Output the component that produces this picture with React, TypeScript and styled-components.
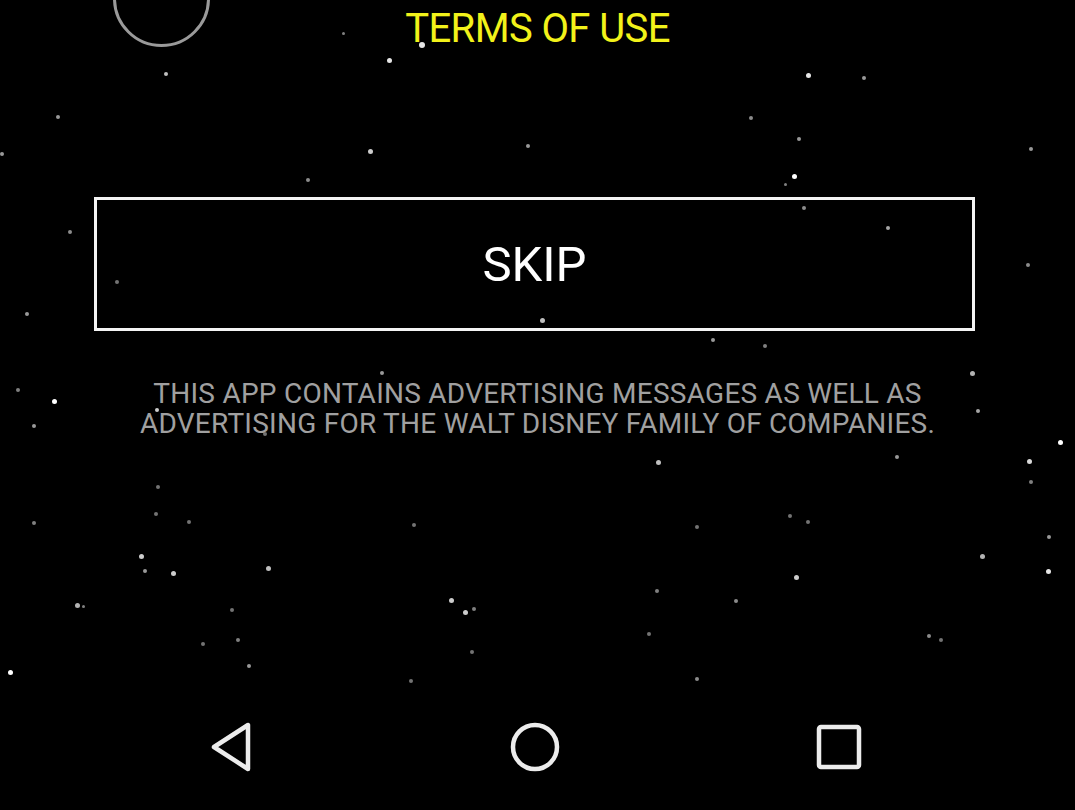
import React from "react";
import styled, { createGlobalStyle } from "styled-components";

const Global = createGlobalStyle`
  html, body { margin: 0; padding: 0; background: #000; }
  body { font-family: Roboto, "Noto Sans", sans-serif; }
`;

const Screen = styled.div`
  position: relative;
  width: 1075px;
  height: 810px;
  background: #000;
  overflow: hidden;
  display: flex;
  flex-direction: column;
`;

const Starfield = styled.div`
  position: absolute;
  inset: 0;
  pointer-events: none;
`;

const Star = styled.span<{ $s: number; $o: number }>`
  position: absolute;
  width: ${(p) => p.$s}px;
  height: ${(p) => p.$s}px;
  margin: ${(p) => -p.$s / 2}px 0 0 ${(p) => -p.$s / 2}px;
  border-radius: 50%;
  background: rgba(255, 255, 255, ${(p) => p.$o});
`;

const CornerRing = styled.div`
  position: absolute;
  left: 113px;
  top: -50px;
  width: 91px;
  height: 91px;
  border: 3px solid #9a9a9a;
  border-radius: 50%;
`;

const Main = styled.main`
  position: relative;
  flex: 1;
  display: flex;
  flex-direction: column;
  align-items: center;
`;

const Title = styled.h1`
  margin: 2px 0 0;
  height: 54px;
  line-height: 54px;
  font-size: 40px;
  font-weight: 400;
  color: #f2f21a;
  letter-spacing: -0.6px;
`;

const SkipButton = styled.button`
  box-sizing: border-box;
  margin: 141px 0 0 -6px;
  width: 881px;
  height: 134px;
  background: transparent;
  border: 3px solid #f4f4f4;
  color: #fff;
  font-family: Roboto, "Noto Sans", sans-serif;
  font-size: 49px;
  font-weight: 400;
  letter-spacing: 0px;
  cursor: pointer;
`;

const Disclaimer = styled.p`
  margin: 48px 0 0;
  text-align: center;
  font-size: 28px;
  line-height: 30px;
  color: #a0a0a0;
  letter-spacing: 0.25px;
`;

const NavBar = styled.nav`
  position: relative;
  height: 126px;
  display: grid;
  grid-template-columns: 232px 303px 304px;
  align-items: center;
`;

const NavSlot = styled.div`
  display: flex;
  justify-content: flex-end;
  width: 100%;
`;

const NavIcon = styled.svg`
  display: block;
  transform: translateX(50%);
`;

const stars: [number, number, number, number][] = [
  [166, 74, 4, 0.75], [389, 60, 5, 0.9], [422, 45, 6, 0.9], [343, 33, 3, 0.5],
  [58, 117, 4, 0.6], [2, 154, 4, 0.6], [370, 151, 5, 0.8], [308, 180, 4, 0.55],
  [528, 146, 4, 0.6], [808, 75, 5, 0.9], [864, 78, 4, 0.6], [751, 118, 4, 0.55],
  [799, 139, 4, 0.6], [794, 176, 5, 1], [785, 184, 3, 0.5], [804, 208, 4, 0.55],
  [1031, 149, 4, 0.6], [888, 228, 4, 0.65], [1028, 265, 4, 0.55], [70, 232, 4, 0.55],
  [117, 282, 4, 0.45], [27, 314, 4, 0.6], [542, 320, 5, 0.75], [713, 340, 4, 0.6],
  [765, 346, 4, 0.5], [382, 373, 4, 0.6], [972, 373, 5, 0.7], [18, 390, 4, 0.5],
  [54, 401, 5, 1], [34, 426, 4, 0.6], [157, 410, 4, 0.8], [265, 434, 4, 0.45],
  [978, 411, 4, 0.65], [1060, 442, 5, 1], [1029, 461, 5, 0.85], [897, 457, 4, 0.6],
  [658, 462, 5, 0.75], [1031, 482, 4, 0.5], [158, 487, 4, 0.45], [156, 514, 4, 0.45],
  [189, 522, 4, 0.45], [34, 523, 4, 0.5], [414, 525, 4, 0.45], [697, 527, 4, 0.45],
  [790, 516, 4, 0.45], [808, 522, 4, 0.45], [1049, 537, 4, 0.6], [982, 556, 5, 0.7],
  [141, 556, 5, 0.8], [145, 571, 4, 0.6], [173, 573, 5, 0.8], [268, 568, 5, 0.75],
  [796, 577, 5, 0.8], [1048, 571, 5, 0.9], [77, 605, 5, 0.7], [83, 606, 3, 0.5],
  [451, 600, 5, 0.8], [465, 612, 5, 0.8], [474, 609, 4, 0.5], [232, 610, 4, 0.45],
  [657, 591, 4, 0.5], [736, 601, 4, 0.55], [238, 640, 4, 0.5], [203, 644, 4, 0.45],
  [649, 634, 4, 0.45], [929, 636, 4, 0.55], [941, 640, 4, 0.45], [472, 652, 4, 0.45],
  [249, 666, 4, 0.6], [10, 672, 5, 1], [697, 679, 4, 0.55], [411, 681, 4, 0.45],
  [810, 420, 4, 0.35],
];

export default function App() {
  return (
    <>
      <Global />
      <Screen>
        <Starfield>
          {stars.map(([x, y, s, o], i) => (
            <Star key={i} $s={s} $o={o} style={{ left: x, top: y }} />
          ))}
        </Starfield>
        <CornerRing />
        <Main>
          <Title>TERMS OF USE</Title>
          <SkipButton>SKIP</SkipButton>
          <Disclaimer>
            THIS APP CONTAINS ADVERTISING MESSAGES AS WELL AS
            <br />
            ADVERTISING FOR THE WALT DISNEY FAMILY OF COMPANIES.
          </Disclaimer>
        </Main>
        <NavBar>
          <NavSlot>
            <NavIcon width="48" height="52" viewBox="0 0 48 52">
              <path
                d="M40 4 L40 48 L6 26 Z"
                fill="none"
                stroke="#ececec"
                strokeWidth="4.5"
                strokeLinejoin="round"
              />
            </NavIcon>
          </NavSlot>
          <NavSlot>
            <NavIcon width="52" height="52" viewBox="0 0 52 52">
              <circle cx="26" cy="26" r="22" fill="none" stroke="#ececec" strokeWidth="4.5" />
            </NavIcon>
          </NavSlot>
          <NavSlot>
            <NavIcon width="46" height="46" viewBox="0 0 46 46">
              <rect
                x="3"
                y="3"
                width="40"
                height="40"
                rx="2"
                fill="none"
                stroke="#ececec"
                strokeWidth="4.5"
              />
            </NavIcon>
          </NavSlot>
        </NavBar>
      </Screen>
    </>
  );
}
